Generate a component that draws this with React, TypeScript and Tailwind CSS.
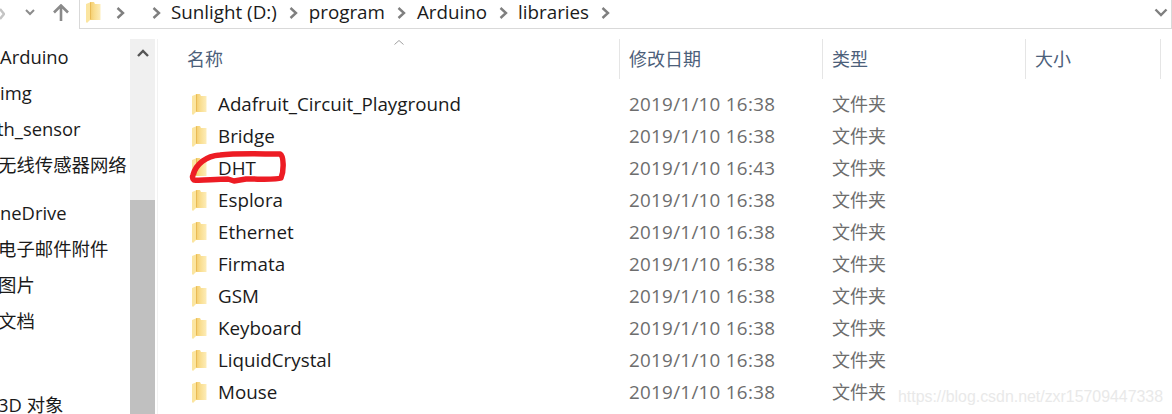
const navItems = [
  { label: "Arduino", cls: "mt-[10px]" },
  { label: "img", cls: "" },
  { label: "th_sensor", cls: "-ml-[3px]" },
  { label: "无线传感器网络", cls: "-ml-[2px]" },
  { label: "neDrive", cls: "mt-[12px]" },
  { label: "电子邮件附件", cls: "-ml-[2px]" },
  { label: "图片", cls: "-ml-[2px]" },
  { label: "文档", cls: "-ml-[2px]" },
  { label: "3D 对象", cls: "mt-[48px] -ml-[2px]" },
];

const files = [
  { name: "Adafruit_Circuit_Playground", date: "2019/1/10 16:38" },
  { name: "Bridge", date: "2019/1/10 16:38" },
  { name: "DHT", date: "2019/1/10 16:43" },
  { name: "Esplora", date: "2019/1/10 16:38" },
  { name: "Ethernet", date: "2019/1/10 16:38" },
  { name: "Firmata", date: "2019/1/10 16:38" },
  { name: "GSM", date: "2019/1/10 16:38" },
  { name: "Keyboard", date: "2019/1/10 16:38" },
  { name: "LiquidCrystal", date: "2019/1/10 16:38" },
  { name: "Mouse", date: "2019/1/10 16:38" },
];

function FolderIcon({ id }: { id: string }) {
  return (
    <svg width="15" height="23" viewBox="0 0 15 23" className="shrink-0">
      <defs>
        <linearGradient id={id} x1="0" y1="0" x2="1" y2="0">
          <stop offset="0" stopColor="#f3c862" />
          <stop offset="0.45" stopColor="#f9dd8e" />
          <stop offset="1" stopColor="#fdedb9" />
        </linearGradient>
      </defs>
      <path d="M4 1 L8 1 L9 3 L14.5 3 L14.5 19 L3 19 Z" fill={`url(#${id})`} />
      <path d="M0 3 L5 1 L5 18 L1 22 L0 21 Z" fill="#fbe5a0" />
      <path d="M5 1 L5 18 L4 19 L4 1.4 Z" fill="#e9bb55" />
    </svg>
  );
}

function Chevron({ className }: { className: string }) {
  return (
    <svg width="9" height="12" viewBox="0 0 9 12" className={className}>
      <path d="M1.5 1 L7 6 L1.5 11" fill="none" stroke="#7f7f7f" strokeWidth="2.4" />
    </svg>
  );
}

export default function App() {
  return (
    <div className="relative h-[414px] w-[1172px] overflow-hidden bg-white font-['Open_Sans','Noto_Sans_CJK_SC',sans-serif] text-[18.8px] text-[#1a1a1a]">
      {/* toolbar + address bar */}
      <div className="flex h-[29px]">
        <div className="flex w-[79px] shrink-0 items-center">
          <svg width="5" height="12" viewBox="0 0 5 12" className="mt-[-2px]">
            <path d="M0 1 L4 6 L0 11" fill="none" stroke="#c4c4c4" strokeWidth="2.4" />
          </svg>
          <svg width="10" height="7" viewBox="0 0 10 7" className="mt-[-4px] ml-[20px]">
            <path d="M1 1 L5 5 L9 1" fill="none" stroke="#8c8c8c" strokeWidth="2" />
          </svg>
          <svg width="18" height="18" viewBox="0 0 18 18" className="mt-[-4px] ml-[17px]">
            <path d="M9 17 L9 2 M2 8.5 L9 1.5 L16 8.5" fill="none" stroke="#8a8a8a" strokeWidth="2.6" />
          </svg>
        </div>
        <div className="flex flex-1 items-center border-r border-b border-l border-[#d9d9d9] pr-[3px] pb-[3px] pl-[6px]">
          <FolderIcon id="addr" />
          <Chevron className="ml-[15px]" />
          <Chevron className="ml-[27px]" />
          <span className="ml-[10px]">Sunlight (D:)</span>
          <Chevron className="ml-[12px]" />
          <span className="ml-[11px]">program</span>
          <Chevron className="ml-[12px]" />
          <span className="ml-[11px]">Arduino</span>
          <Chevron className="ml-[12px]" />
          <span className="ml-[10px]">libraries</span>
          <Chevron className="ml-[12px]" />
          <svg width="14" height="9" viewBox="0 0 14 9" className="ml-auto">
            <path d="M1.5 1.5 L7 7 L12.5 1.5" fill="none" stroke="#7f7f7f" strokeWidth="2.4" />
          </svg>
        </div>
      </div>

      <div className="flex h-[385px]">
        {/* navigation pane */}
        <nav className="w-[130px] shrink-0 overflow-hidden text-[18.4px] whitespace-nowrap">
          {navItems.map((item) => (
            <div key={item.label} className={`flex h-[36px] items-center ${item.cls}`}>
              {item.label}
            </div>
          ))}
        </nav>

        {/* scrollbar */}
        <div className="mt-[10px] flex w-[25px] shrink-0 flex-col bg-[#f0f0f0]">
          <div className="flex h-[161px] justify-center pt-[10px]">
            <svg width="12" height="8" viewBox="0 0 12 8">
              <path d="M1 7 L6 2 L11 7" fill="none" stroke="#555555" strokeWidth="2.4" />
            </svg>
          </div>
          <div className="flex-1 bg-[#c0c0c0]" />
        </div>
        <div className="mt-[10px] ml-[2px] w-[1px] bg-[#f2f2f2]" />

        {/* file list */}
        <div className="relative flex-1">
          <div className="mt-[10px] flex h-[40px] text-[18px] text-[#4c607a]">
            <div className="flex w-[461px] items-center pt-[1px] pl-[29px]">名称</div>
            <div className="flex w-[203px] items-center border-l border-[#e5e5e5] pt-[1px] pl-[9px]">修改日期</div>
            <div className="flex w-[203px] items-center border-l border-[#e5e5e5] pt-[1px] pl-[9px]">类型</div>
            <div className="flex w-[136px] items-center border-x border-[#e5e5e5] pt-[1px] pl-[9px]">大小</div>
          </div>
          <svg width="10" height="5" viewBox="0 0 10 5" className="absolute top-[11px] left-[236px]">
            <path d="M0.5 4.5 L5 0.5 L9.5 4.5" fill="none" stroke="#a0a0a0" strokeWidth="1" />
          </svg>
          <div className="mt-[9px]">
            {files.map((file, i) => (
              <div key={file.name} className="flex h-[32px] items-center">
                <div className="flex w-[462px] items-center pl-[34px]">
                  <FolderIcon id={`f${i}`} />
                  <span className="ml-[11px]">{file.name}</span>
                </div>
                <div className="w-[203px] pl-[9px] tracking-[0.3px] text-[#6d6d6d]">{file.date}</div>
                <div className="pl-[9px] text-[18px] text-[#6d6d6d]">文件夹</div>
              </div>
            ))}
          </div>
        </div>
      </div>

      {/* hand-drawn marker ring */}
      <svg width="110" height="40" viewBox="0 0 110 40" className="absolute top-[147px] left-[186px]">
        <path
          d="M7 28 C10 17 20 9 34 8 C50 6 75 7 94 7 C98 9 98 24 95 31 C90 33 75 32 60 32 L48 34 L42 32 C28 32 15 34 8 33 C6 31 6 30 7 28 Z"
          fill="none"
          stroke="#ed1c24"
          strokeWidth="5.5"
          strokeLinejoin="round"
        />
      </svg>

      {/* watermark */}
      <div className="absolute top-[385px] left-[898px] font-['Liberation_Sans',sans-serif] text-[15.9px] text-[#e9e9e9]">
        https://blog.csdn.net/zxr15709447338
      </div>
    </div>
  );
}
